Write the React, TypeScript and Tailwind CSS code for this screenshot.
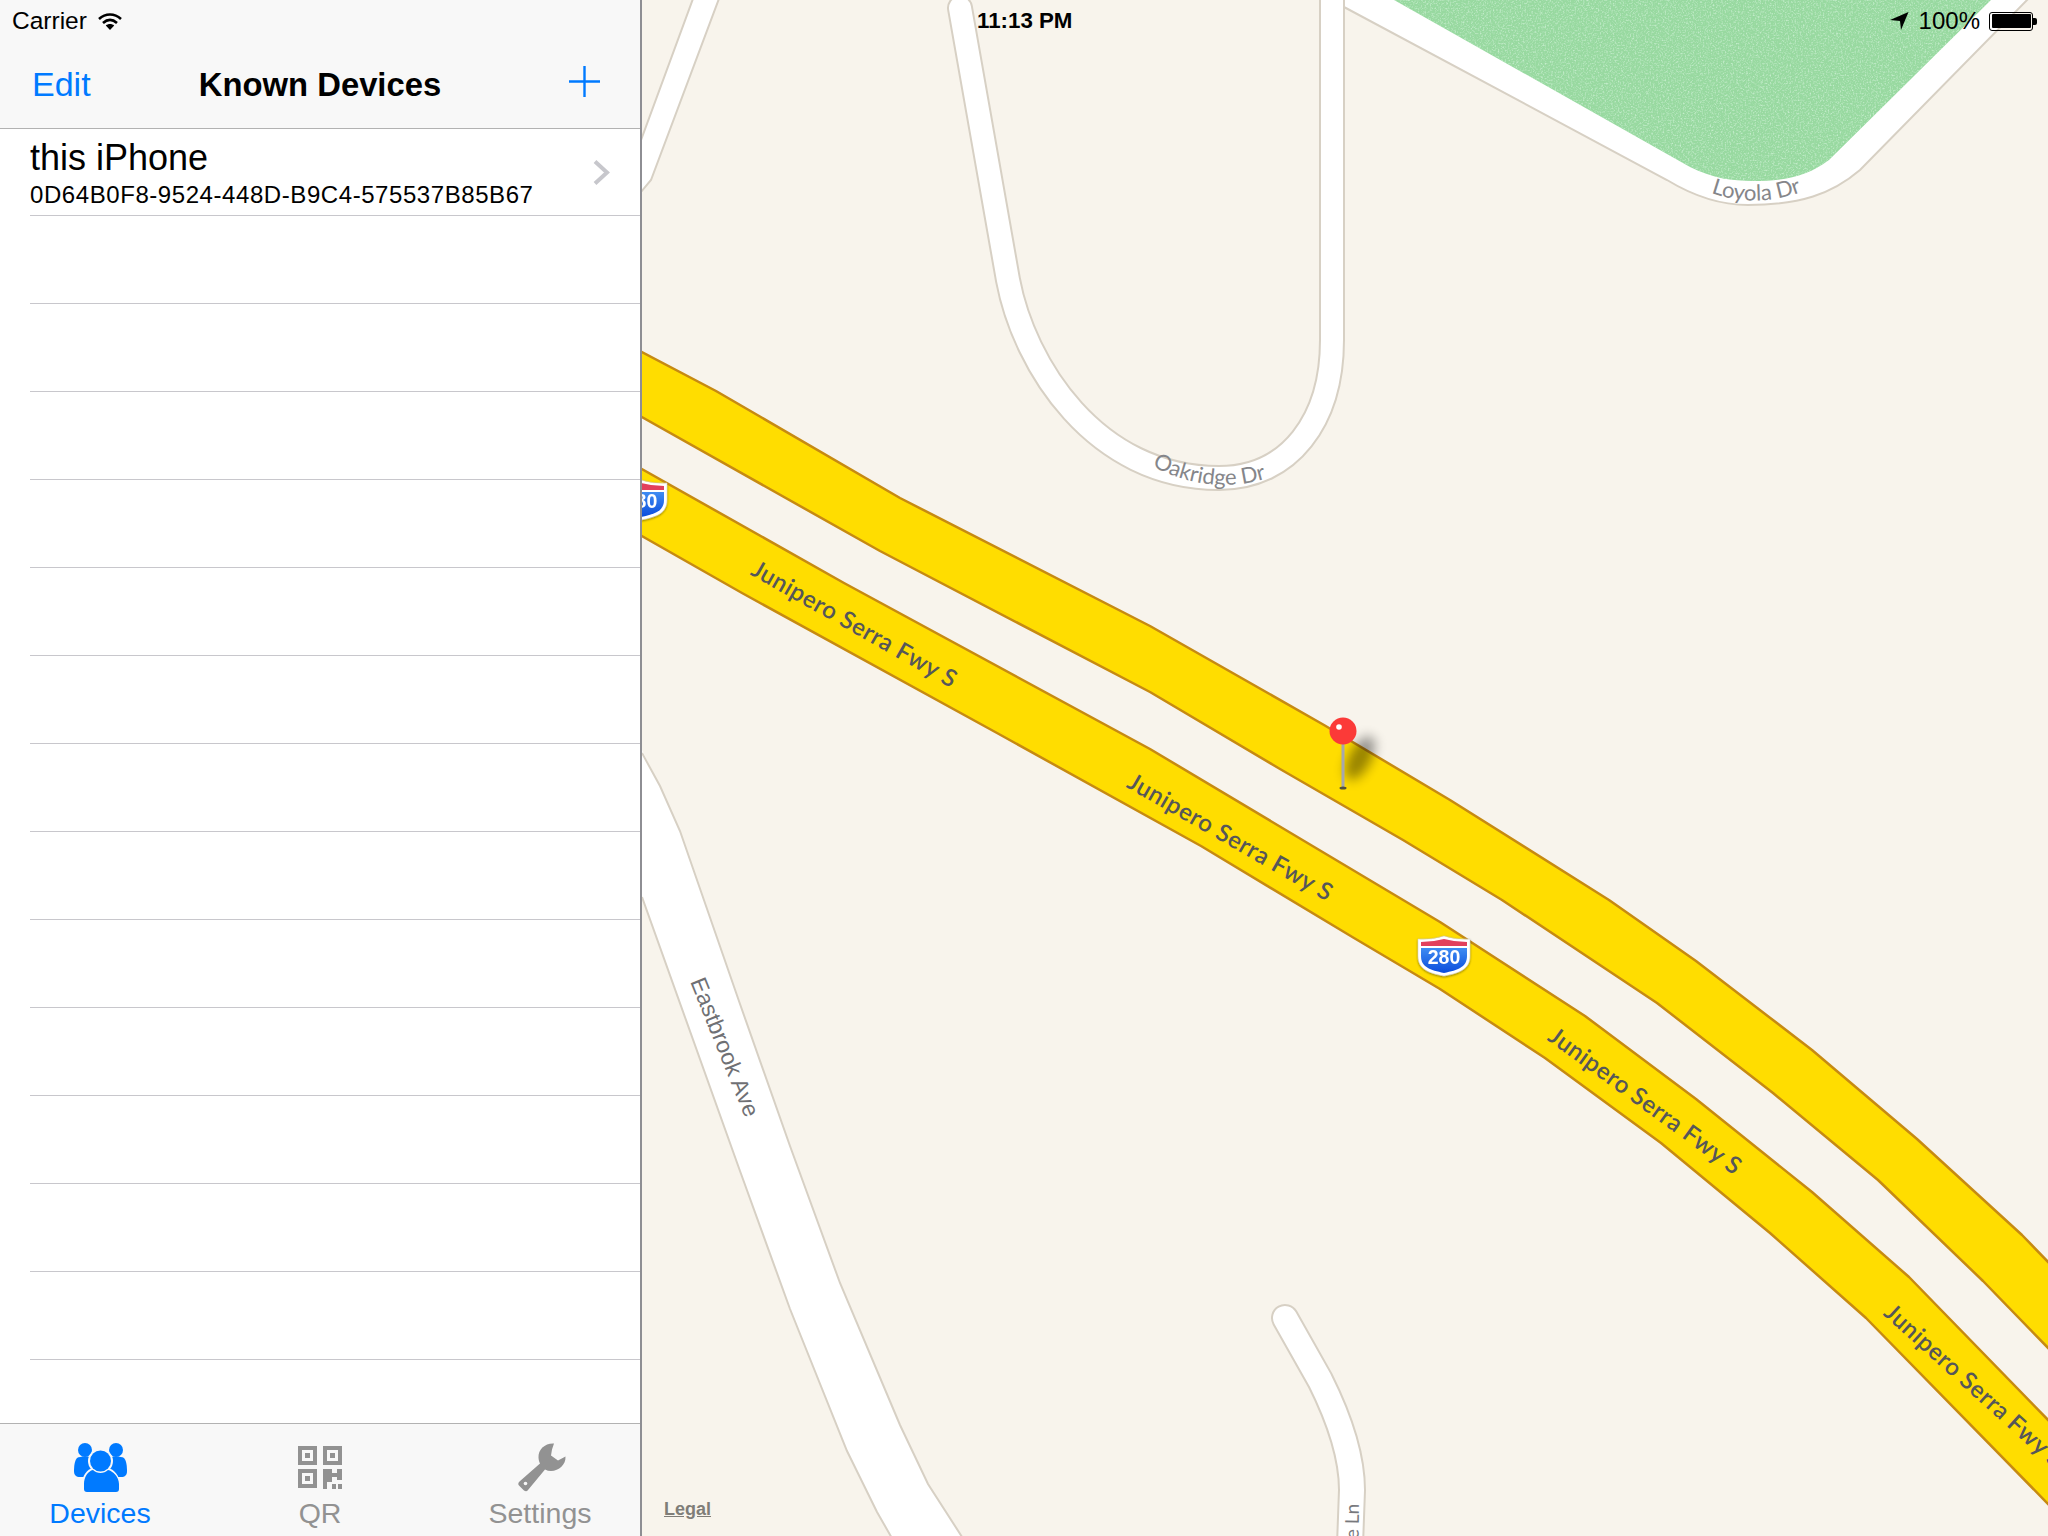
const ROW_COUNT = 14;

const HIGHWAYS = [
  '640,351 716,391 900,498 1150,626 1324,725 1450,800 1609,900 1696,961 1812,1050 1917,1139 2022,1235 2052,1266 2052,1352 1983,1281 1878,1180 1773,1093 1657,1003 1502,900 1403,840 1280,769 1150,692 880,551 640,416',
  '640,468 844,583 1150,749 1440,922 1585,1016 1696,1099 1812,1192 1909,1277 2052,1424 2052,1508 1866,1318 1770,1233 1661,1143 1545,1058 1440,989 1354,938 1201,846 997,733 742,593 640,535',
];

const FREEWAY_LABELS = [
  { x: 855, y: 623, angle: 29.5 },
  { x: 1231, y: 836, angle: 29.7 },
  { x: 1646, y: 1100, angle: 36 },
  { x: 1975, y: 1385, angle: 42 },
];

function InterstateBadge({ x, y }: { x: number; y: number }) {
  return (
    <g transform={`translate(${x} ${y})`} filter="url(#badge-shadow)">
      <path d="M0 3Q14 4 26 0Q38 4 52 3L52 20C52 33 42 37 26 40C10 37 0 33 0 20Z" fill="#ffffff" stroke="#c9c9c9" strokeWidth="0.5" />
      <path d="M3 6Q15 6 26 3Q37 6 49 6L49 10L3 10Z" fill="#e2405c" />
      <path d="M3 12L49 12L49 20C49 31 40 34 26 37C12 34 3 31 3 20Z" fill="url(#badge-blue)" />
      <text x="26" y="27.5" textAnchor="middle" className="fill-white font-['Liberation_Sans',sans-serif] text-[19.5px] font-bold">
        280
      </text>
    </g>
  );
}

function MapCanvas() {
  return (
    <svg viewBox="642 0 1406 1536" className="block h-full w-full">
      <defs>
        <linearGradient id="badge-blue" x1="0" y1="0" x2="0" y2="1">
          <stop offset="0" stopColor="#3f8cf2" />
          <stop offset="1" stopColor="#0a4cdc" />
        </linearGradient>
        <filter id="badge-shadow" x="-20%" y="-20%" width="140%" height="150%">
          <feDropShadow dx="0" dy="1" stdDeviation="1.2" floodColor="#000000" floodOpacity="0.45" />
        </filter>
        <filter id="pin-shadow" x="-100%" y="-100%" width="300%" height="300%">
          <feGaussianBlur stdDeviation="6" />
        </filter>
        <filter id="grass" x="0" y="0" width="100%" height="100%">
          <feTurbulence type="fractalNoise" baseFrequency="0.6" numOctaves="2" seed="4" />
          <feColorMatrix values="0 0 0 0 0.75 0 0 0 0 0.95 0 0 0 0 0.8 2.6 0 0 0 -1.2" />
        </filter>
        <clipPath id="park">
          <path d="M1387 -4L1690 167C1712 178 1732 181 1753 181C1785 181 1808 176 1829 160L1995 -4Z" />
        </clipPath>
      </defs>

      <rect x="642" y="0" width="1406" height="1536" fill="#f8f4ec" />

      {/* side streets */}
      <path d="M694 -4L630 170L630 205L651 180L720 -4Z" fill="#ffffff" stroke="#d7d0c4" strokeWidth="2" />
      <path d="M642 750L660 786L680 831L740 1004L790 1146L840 1283L900 1425L928 1484L964 1540L893 1540L877 1512L847 1451L790 1309L740 1171L642 897Z" fill="#ffffff" />
      <path d="M642 753L660 786L680 831L740 1004L790 1146L840 1283L900 1425L928 1484L964 1540M642 897L740 1171L790 1309L847 1451L877 1512L893 1540" fill="none" stroke="#d7d0c4" strokeWidth="2" />
      <path d="M960 8L1008 280C1024 365 1095 478 1219 478C1290 478 1332 420 1332 340L1332 -10" fill="none" stroke="#d7d0c4" strokeWidth="26" strokeLinecap="round" />
      <path d="M960 8L1008 280C1024 365 1095 478 1219 478C1290 478 1332 420 1332 340L1332 -10" fill="none" stroke="#ffffff" strokeWidth="22" strokeLinecap="round" />
      <path d="M1285 1318L1320 1380C1335 1410 1352 1450 1352 1490L1350 1545" fill="none" stroke="#d7d0c4" strokeWidth="28" strokeLinecap="round" />
      <path d="M1285 1318L1320 1380C1335 1410 1352 1450 1352 1490L1350 1545" fill="none" stroke="#ffffff" strokeWidth="24" strokeLinecap="round" />

      {/* Loyola Dr and the park inside it */}
      <path d="M1344 7L1667 180C1695 197 1720 205 1748 205C1800 205 1832 194 1860 170L2031 -4L1344 -4Z" fill="#ffffff" stroke="#d7d0c4" strokeWidth="2" />
      <path d="M1387 -4L1690 167C1712 178 1732 181 1753 181C1785 181 1808 176 1829 160L1995 -4Z" fill="#98d9a0" />
      <rect x="1380" y="0" width="620" height="185" filter="url(#grass)" clipPath="url(#park)" opacity="0.6" />

      {HIGHWAYS.map((points) => (
        <polygon key={points} points={points} fill="#ffdd00" stroke="#c68a12" strokeWidth="2.5" strokeLinejoin="round" />
      ))}

      {FREEWAY_LABELS.map((label) => (
        <text
          key={label.x}
          x={label.x}
          y={label.y}
          textAnchor="middle"
          dominantBaseline="central"
          transform={`rotate(${label.angle} ${label.x} ${label.y})`}
          className="fill-[#55565a] font-['Lato',sans-serif] text-[24px] font-semibold tracking-[0.5px]"
        >
          Junipero Serra Fwy S
        </text>
      ))}

      <path id="oakridge-label" d="M1152 466Q1212 498 1275 476" fill="none" />
      <text className="fill-[#85868a] font-['Lato',sans-serif] text-[22px]">
        <textPath href="#oakridge-label">Oakridge Dr</textPath>
      </text>
      <path id="loyola-label" d="M1711 193Q1757 209 1804 191" fill="none" />
      <text className="fill-[#85868a] font-['Lato',sans-serif] text-[22px]">
        <textPath href="#loyola-label">Loyola Dr</textPath>
      </text>
      <text
        x="725"
        y="1047"
        textAnchor="middle"
        dominantBaseline="central"
        transform="rotate(68 725 1047)"
        className="fill-[#6f7074] font-['Liberation_Sans',sans-serif] text-[23px]"
      >
        Eastbrook Ave
      </text>
      <text
        x="1359"
        y="1504"
        textAnchor="end"
        transform="rotate(-89 1359 1504)"
        className="fill-[#77787c] font-['Lato',sans-serif] text-[19px]"
      >
        e Ln
      </text>

      <InterstateBadge x={615} y={480} />
      <InterstateBadge x={1418} y={936} />

      {/* dropped pin */}
      <ellipse cx="1360" cy="758" rx="11" ry="24" fill="#000000" opacity="0.4" filter="url(#pin-shadow)" transform="rotate(28 1360 758)" />
      <rect x="1341.5" y="742" width="3" height="46" fill="#a6a7ad" />
      <ellipse cx="1343" cy="788" rx="3.5" ry="1.5" fill="#54513a" />
      <circle cx="1343" cy="731" r="13.5" fill="#fb3a38" />
      <circle cx="1339" cy="727" r="2.8" fill="#ffffff" />
    </svg>
  );
}

function StatusBar() {
  return (
    <div className="absolute inset-x-0 top-0 flex h-[42px] items-center justify-between pl-[12px] pr-[11px] text-[24.5px] text-black">
      <div className="flex items-center gap-[11px]">
        <span>Carrier</span>
        <svg width="24" height="17" viewBox="0 0 24 17" fill="none" stroke="#000000" strokeWidth="2.6">
          <path d="M1 6C7.500 0 16.500 0 23 6" />
          <path d="M5 10C9.500 6 14.500 6 19 10" />
          <path d="M12 17L7.800 12.500C10 10.500 14 10.500 16.200 12.500Z" fill="#000000" stroke="none" />
        </svg>
      </div>
      <span className="absolute left-[977px] text-[22.300px] font-bold">11:13 PM</span>
      <div className="flex items-center">
        <svg width="19" height="18" viewBox="0 0 19 18" className="mr-[10px]">
          <path d="M18.500 0L0 8L10 9L11 18Z" fill="#000000" />
        </svg>
        <span className="mr-[9px] text-[24px]">100%</span>
        <div className="flex items-center">
          <div className="h-[19px] w-[44px] rounded-[3px] border border-black p-[1.500px]">
            <div className="h-full w-full rounded-[1px] bg-black" />
          </div>
          <div className="h-[7px] w-[4px] rounded-r-[2px] bg-black" />
        </div>
      </div>
    </div>
  );
}

function NavBar() {
  return (
    <header className="grid h-[129px] shrink-0 grid-cols-[1fr_auto_1fr] items-center border-b border-[#b2b2b2] bg-[#f8f8f8] pt-[41px]">
      <span className="pl-[32px] text-[34px] text-[#007aff]">Edit</span>
      <span className="text-[32.800px] font-bold text-black">Known Devices</span>
      <div className="flex justify-end pr-[40px]">
        <svg width="31" height="31" viewBox="0 0 31 31" className="-mt-[6px]" fill="none" stroke="#007aff" strokeWidth="2.4">
          <path d="M15.500 0V31M0 15.500H31" />
        </svg>
      </div>
    </header>
  );
}

function DeviceRow({ first }: { first: boolean }) {
  return (
    <div className="ml-[30px] h-[88px] shrink-0 border-b border-[#c8c7cc] first:h-[87px]">
      {first ? (
        <div className="flex h-full items-center justify-between pr-[30px]">
          <div className="pt-[2px] text-black">
            <div className="text-[36px] leading-[42px]">this iPhone</div>
            <div className="mt-[2px] text-[24px] leading-[28px] tracking-[0.57px]">0D64B0F8-9524-448D-B9C4-575537B85B67</div>
          </div>
          <svg width="17" height="25" viewBox="0 0 17 25" fill="none" stroke="#c7c7cc" strokeWidth="4">
            <path d="M2 1.500L14 12.500L2 23.500" />
          </svg>
        </div>
      ) : null}
    </div>
  );
}

function DevicesIcon() {
  return (
    <svg width="53" height="49" viewBox="0 0 53 49" fill="#007aff">
      <circle cx="11" cy="7" r="7" />
      <circle cx="42" cy="7" r="7" />
      <path d="M3 15C6 13 16 13 19 15L19 34L6 34C2 34 0 32 0 28C0 22 1 17 3 15Z" />
      <path d="M50 15C47 13 37 13 34 15L34 34L47 34C51 34 53 32 53 28C53 22 52 17 50 15Z" />
      <circle cx="26.500" cy="18" r="12.500" fill="#f8f8f8" />
      <path d="M8 49L8 41C8 33 13 26 19 25C22 29 31 29 34 25C40 26 46 33 46 41L46 49Z" fill="#f8f8f8" />
      <circle cx="26.500" cy="18" r="10.500" />
      <path d="M10 46L10 41C10 34 14 28 19 27C23 31 30 31 34 27C39 28 45 34 45 41L45 46C45 48 44 49 42 49L13 49C11 49 10 48 10 46Z" />
    </svg>
  );
}

function QrIcon() {
  const finder = (x: number, y: number) =>
    `M${x} ${y}h19v19h-19zM${x + 4} ${y + 4}v11h11v-11zM${x + 7} ${y + 7}h5v5h-5z`;
  return (
    <svg width="44" height="43" viewBox="0 0 44 43" fill="#929292">
      <path fillRule="evenodd" d={`${finder(0, 0)}${finder(25, 0)}${finder(0, 23)}`} />
      <path d="M25 23h9v4h5v-4h5v11h-5v-3h-5v5h-5v7h-4z" />
      <path d="M34 38h4v5h-4zM40 38h4v5h-4z" />
    </svg>
  );
}

function WrenchIcon() {
  return (
    <svg width="48" height="49" viewBox="0 0 48 48" className="ml-[3px]" fill="#929292">
      <path d="M36 0C27 -0.500 20 6 20.500 14C20.600 16 21 18 22 20L1.500 38C0 39.500 0 41 1 42L6 47C7.500 48 9 48 10 46.500L27 26C29 27 31 27.500 33 27.500C41 27.500 48 21 47.500 13L40 17L33 12L34 6Z" />
      <circle cx="7.500" cy="40" r="1.800" fill="#f8f8f8" />
    </svg>
  );
}

function TabItem({ label, active, children }: { label: string; active?: boolean; children: React.ReactNode }) {
  return (
    <div className={`flex flex-col items-center pt-[19px] ${active ? 'text-[#007aff]' : 'text-[#929292]'}`}>
      <div className="flex h-[49px] items-center">{children}</div>
      <span className="mt-[5px] text-[28.500px] leading-[32px]">{label}</span>
    </div>
  );
}

function TabBar() {
  return (
    <nav className="grid h-[113px] shrink-0 grid-cols-[200px_240px_200px] border-t border-[#b2b2b2] bg-[#f8f8f8]">
      <TabItem label="Devices" active>
        <DevicesIcon />
      </TabItem>
      <TabItem label="QR">
        <QrIcon />
      </TabItem>
      <TabItem label="Settings">
        <WrenchIcon />
      </TabItem>
    </nav>
  );
}

export default function App() {
  return (
    <div className="relative flex h-[1536px] w-[2048px] overflow-hidden bg-white font-['Liberation_Sans',Arial,sans-serif]">
      <aside className="flex h-full w-[642px] shrink-0 flex-col border-r-2 border-[#8e8e93]">
        <NavBar />
        <div className="flex min-h-0 flex-1 flex-col overflow-hidden">
          {Array.from({ length: ROW_COUNT }, (_, index) => (
            <DeviceRow key={index} first={index === 0} />
          ))}
        </div>
        <TabBar />
      </aside>
      <main className="relative min-w-0 flex-1">
        <MapCanvas />
        <span className="absolute bottom-[17px] left-[22px] text-[18px] font-bold leading-[20px] text-[#7f7d78] underline">Legal</span>
      </main>
      <StatusBar />
    </div>
  );
}
